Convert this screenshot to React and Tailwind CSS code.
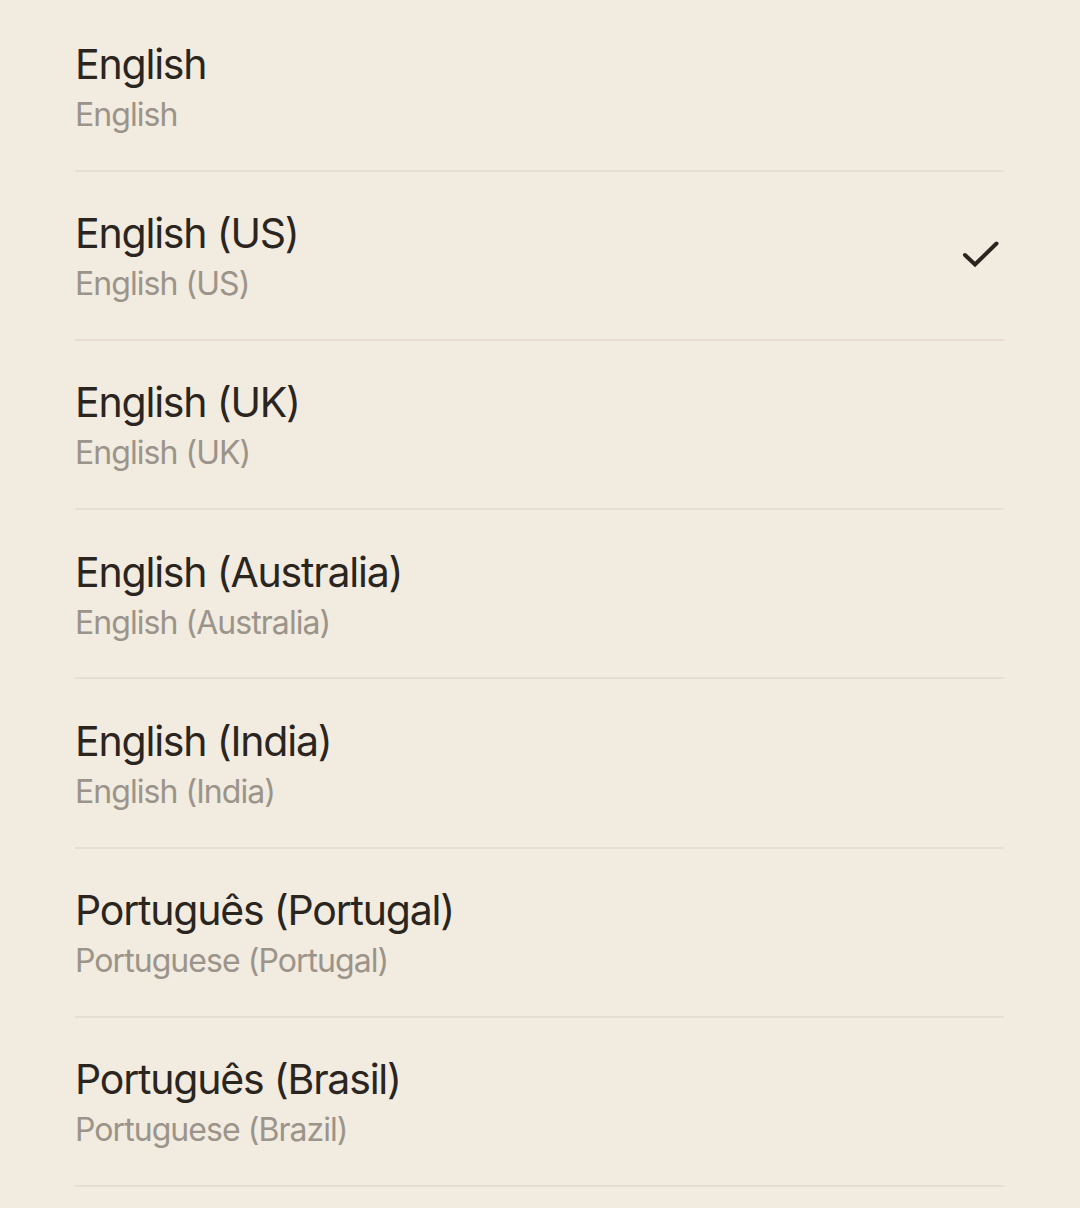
import React from "react";

const items = [
  ["English", "English", false],
  ["English (US)", "English (US)", true],
  ["English (UK)", "English (UK)", false],
  ["English (Australia)", "English (Australia)", false],
  ["English (India)", "English (India)", false],
  ["Português (Portugal)", "Portuguese (Portugal)", false],
  ["Português (Brasil)", "Portuguese (Brazil)", false],
];

export default function App() {
  return (
    <div
      className="w-[1080px] h-[1208px] overflow-hidden bg-[#f2ebe0]"
      style={{ fontFamily: "Inter, 'Noto Sans', sans-serif" }}
    >
      <div className="pl-[75px] pr-[76px] pt-[2.25px]">
        {items.map(([title, sub, checked], i) => (
          <div
            key={i}
            className="relative h-[169.25px] pt-[36.7px] border-b-2 border-[#e6ded2]"
          >
            <div className="flex flex-col">
              <div className="text-[41px] leading-[50px] text-[#2a251f] tracking-[-1.2px]">
                {title}
              </div>
              <div className="mt-[6px] text-[32px] leading-[40px] text-[#9b948a] tracking-[-0.95px]">
                {sub}
              </div>
            </div>
            {checked && (
              <div className="absolute right-[4px] top-0 bottom-0 flex items-center">
                <svg
                  width="40"
                  height="40"
                  viewBox="0 0 40 40"
                  fill="none"
                  stroke="#2a251f"
                  strokeWidth="4"
                  strokeLinecap="round"
                  strokeLinejoin="miter"
                >
                  <path d="M5 20 L15 29.5 L36.5 8.5" />
                </svg>
              </div>
            )}
          </div>
        ))}
      </div>
    </div>
  );
}
